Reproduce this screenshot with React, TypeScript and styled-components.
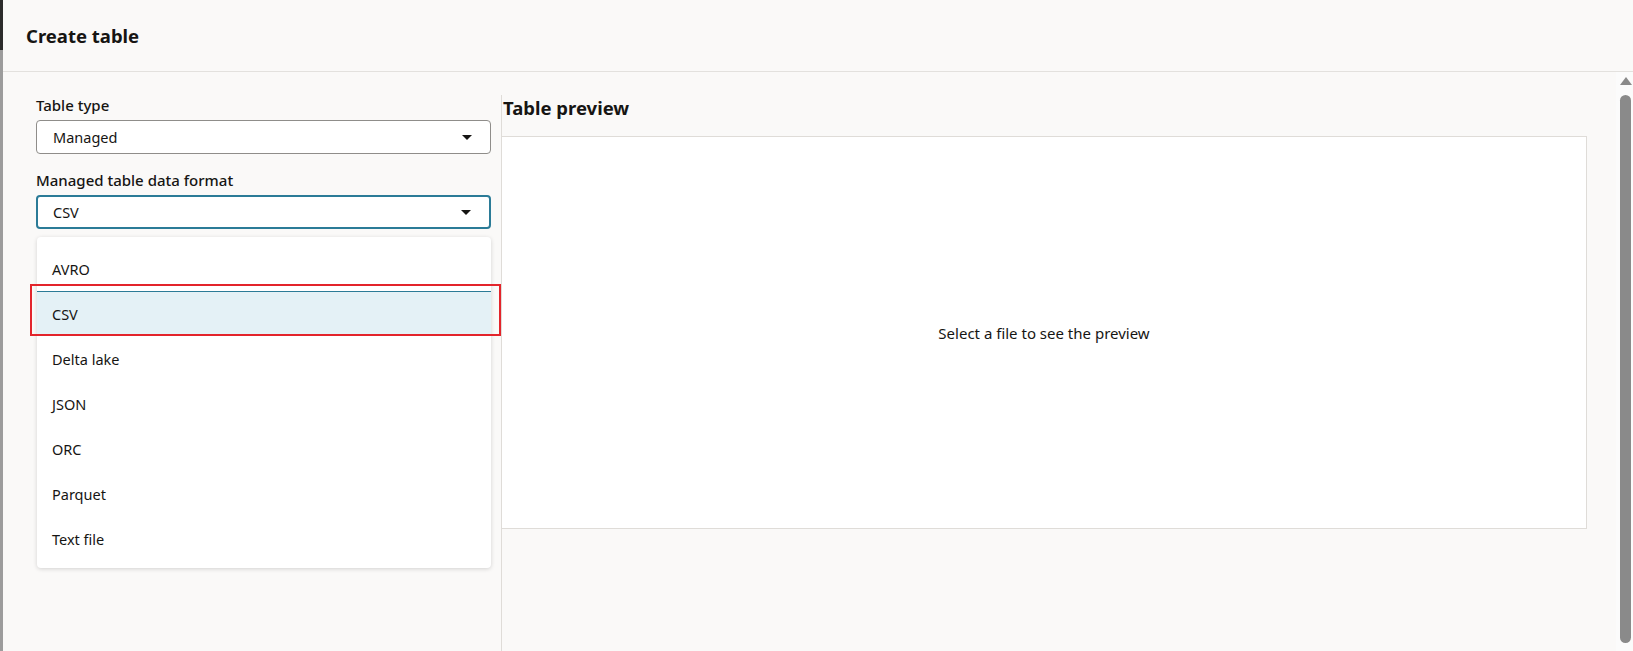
import styled, { createGlobalStyle } from 'styled-components';

const GlobalStyle = createGlobalStyle`
  html, body {
    margin: 0;
    padding: 0;
    background: #faf9f8;
    font-family: 'Noto Sans', 'Open Sans', sans-serif;
    color: #161513;
  }
  * { box-sizing: border-box; }
`;

const formats = ['AVRO', 'CSV', 'Delta lake', 'JSON', 'ORC', 'Parquet', 'Text file'];

const Page = styled.div`
  display: flex;
  width: 1633px;
  height: 651px;
  overflow: hidden;
  background: #faf9f8;
`;

const EdgeStrip = styled.div`
  width: 3px;
  flex-shrink: 0;
  background: linear-gradient(to bottom, #2b2b2b 0, #2b2b2b 50px, #9c9c9c 50px);
`;

const Main = styled.div`
  flex: 1;
  display: flex;
  flex-direction: column;
  min-width: 0;
`;

const Header = styled.header`
  height: 72px;
  flex-shrink: 0;
  display: flex;
  align-items: center;
  padding-left: 23px;
  border-bottom: 1px solid #e3e1de;
`;

const Title = styled.h1`
  margin: 0;
  font-size: 18.5px;
  font-weight: 700;
  line-height: 24px;
`;

const Body = styled.div`
  flex: 1;
  display: flex;
  min-height: 0;
`;

const FormPane = styled.div`
  width: 498px;
  flex-shrink: 0;
  padding: 23px 10px 0 33px;
  display: flex;
  flex-direction: column;
`;

const Label = styled.div`
  font-size: 15px;
  font-weight: 500;
  line-height: 20px;
  margin-bottom: 5px;
`;

const Field = styled.div`
  position: relative;
  margin-bottom: 16px;
`;

const Select = styled.div<{ $focused?: boolean }>`
  height: 34px;
  display: flex;
  align-items: center;
  justify-content: space-between;
  padding: 0 18px 0 ${(p) => (p.$focused ? '15px' : '16px')};
  background: #fff;
  border: ${(p) => (p.$focused ? '2px solid #2b7b97' : '1px solid #8f8d8a')};
  border-radius: 4px;
  font-size: 14.5px;
`;

const Caret = styled.span`
  width: 0;
  height: 0;
  border-left: 5px solid transparent;
  border-right: 5px solid transparent;
  border-top: 5px solid #161513;
`;

const Menu = styled.ul`
  list-style: none;
  margin: 8px 0 0 1px;
  padding: 9px 0 7px;
  background: #fff;
  border-radius: 4px;
  box-shadow: 0 1px 4px rgba(0, 0, 0, 0.16);
`;

const MenuItem = styled.li<{ $selected?: boolean }>`
  height: 45px;
  display: flex;
  align-items: center;
  padding-left: 15px;
  font-size: 14.5px;
  background: ${(p) => (p.$selected ? '#e4f1f6' : 'transparent')};
  border-top: ${(p) => (p.$selected ? '1px solid #2b7b97' : '1px solid transparent')};
`;

const Highlight = styled.div`
  position: absolute;
  left: -6px;
  right: -10px;
  top: 89px;
  height: 52px;
  border: 2px solid #e3242b;
  pointer-events: none;
`;

const PreviewPane = styled.section`
  flex: 1;
  margin-top: 23px;
  border-left: 1px solid #dfdcd8;
  padding-right: 29px;
  display: flex;
  flex-direction: column;
`;

const PreviewTitle = styled.h2`
  margin: 1px 0 16px 1px;
  font-size: 18.5px;
  font-weight: 700;
  line-height: 24px;
`;

const PreviewBox = styled.div`
  height: 393px;
  background: #fff;
  border: 1px solid #dfdcd8;
  border-left: none;
  display: flex;
  align-items: center;
  justify-content: center;
  font-size: 15px;
`;

const ScrollTrack = styled.div`
  width: 17px;
  flex-shrink: 0;
  background: #fbfbfb;
  display: flex;
  flex-direction: column;
  align-items: center;
  padding: 5px 2px 8px 4px;
`;

const ScrollArrow = styled.span`
  width: 0;
  height: 0;
  border-left: 6px solid transparent;
  border-right: 6px solid transparent;
  border-bottom: 8px solid #8a8a8a;
  margin-bottom: 10px;
`;

const ScrollThumb = styled.div`
  flex: 1;
  width: 11px;
  background: #8a8a8a;
  border-radius: 6px;
`;

export default function App() {
  return (
    <Page>
      <GlobalStyle />
      <EdgeStrip />
      <Main>
        <Header>
          <Title>Create table</Title>
        </Header>
        <Body>
          <FormPane>
            <Label>Table type</Label>
            <Field>
              <Select>
                Managed
                <Caret />
              </Select>
            </Field>
            <Label>Managed table data format</Label>
            <Field>
              <Select $focused>
                CSV
                <Caret />
              </Select>
              <Menu>
                {formats.map((f) => (
                  <MenuItem key={f} $selected={f === 'CSV'}>
                    {f}
                  </MenuItem>
                ))}
              </Menu>
              <Highlight />
            </Field>
          </FormPane>
          <PreviewPane>
            <PreviewTitle>Table preview</PreviewTitle>
            <PreviewBox>Select a file to see the preview</PreviewBox>
          </PreviewPane>
          <ScrollTrack>
            <ScrollArrow />
            <ScrollThumb />
          </ScrollTrack>
        </Body>
      </Main>
    </Page>
  );
}
